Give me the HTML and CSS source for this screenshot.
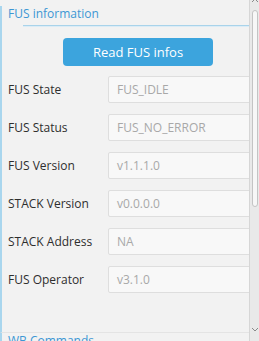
FILE: index.html
```html
<!DOCTYPE html>
<html lang="en">
<head>
    <meta charset="UTF-8">
    <meta name="viewport" content="width=device-width, initial-scale=1.0">
    <title>FUS information</title>
    <link rel="stylesheet" href="styles.css">
</head>
<body>
    <div class="window">
        <div class="pane">
            <div class="group">
                <div class="group-title">FUS information</div>
                <div class="rule"></div>
                <button class="read-btn">Read FUS infos</button>
                <div class="rows">
                    <div class="row"><span class="label">FUS State</span><div class="field">FUS_IDLE</div></div>
                    <div class="row"><span class="label">FUS Status</span><div class="field">FUS_NO_ERROR</div></div>
                    <div class="row"><span class="label">FUS Version</span><div class="field">v1.1.1.0</div></div>
                    <div class="row"><span class="label">STACK Version</span><div class="field">v0.0.0.0</div></div>
                    <div class="row"><span class="label">STACK Address</span><div class="field">NA</div></div>
                    <div class="row"><span class="label">FUS Operator</span><div class="field">v3.1.0</div></div>
                </div>
            </div>
            <div class="group next">
                <div class="group-title">WB Commands</div>
            </div>
        </div>
        <div class="scrollbar">
            <svg class="arrow up" width="8" height="6" viewBox="0 0 8 6"><path d="M1 5 L4 2 L7 5" fill="none" stroke="#8a8a8a" stroke-width="1"/></svg>
            <div class="thumb"></div>
            <div class="spacer"></div>
            <svg class="arrow down" width="8" height="6" viewBox="0 0 8 6"><path d="M1 1 L4 4 L7 1" fill="none" stroke="#8a8a8a" stroke-width="1"/></svg>
        </div>
    </div>
</body>
</html>
```

FILE: styles.css
```css
html, body {
    margin: 0;
    padding: 0;
    height: 100%;
}
body {
    font-family: "Open Sans", "Noto Sans", sans-serif;
    background: #f2f2f2;
    overflow: hidden;
}
.window {
    display: flex;
    height: 341px;
}
.pane {
    width: 249px;
    border-right: 1px solid #d6d6d6;
    overflow: hidden;
}
.group {
    margin-top: 10px;
    height: 326px;
    border-left: 2px solid #a9d6ee;
    box-sizing: border-box;
}
.group.next {
    margin-top: 0;
    border-top: 1px solid #e4e4e4;
}
.group-title {
    margin-top: -4px;
    padding-left: 6px;
    font-size: 12px;
    line-height: 16px;
    color: #3d97d4;
}
.group.next .group-title {
    margin-top: 0;
}
.rule {
    margin: 3px 0 0 21px;
    height: 1px;
    background: #a9d3ea;
    border-bottom: 1px solid #dbecf6;
}
.read-btn {
    display: block;
    margin: 11px 0 0 61px;
    width: 150px;
    height: 28px;
    background: #3ca4dd;
    color: #fff;
    border: none;
    border-radius: 4px;
    font-family: inherit;
    font-size: 13px;
    padding: 0;
}
.rows {
    margin-top: 10px;
    display: flex;
    flex-direction: column;
    gap: 11px;
}
.row {
    display: flex;
    align-items: center;
    height: 27px;
    margin-right: -10px;
}
.label {
    width: 100px;
    padding-left: 6px;
    font-size: 12px;
    color: #2e2e2e;
}
.field {
    flex: 1;
    height: 27px;
    box-sizing: border-box;
    border: 1px solid #dedede;
    border-radius: 2px;
    background: #f8f8f8;
    padding-left: 8px;
    font-size: 12px;
    line-height: 25px;
    color: #a8a8a8;
}
.scrollbar {
    width: 9px;
    background: #e9e9e9;
    display: flex;
    flex-direction: column;
    align-items: center;
}
.arrow.up {
    margin-top: -3px;
}
.thumb {
    margin-top: 7px;
    width: 6px;
    height: 197px;
    box-sizing: border-box;
    background: #f7f7f7;
    border: 1px solid #c4c4c4;
    border-radius: 3px;
}
.spacer {
    flex: 1;
}
.arrow.down {
    margin-bottom: 8px;
}
```
